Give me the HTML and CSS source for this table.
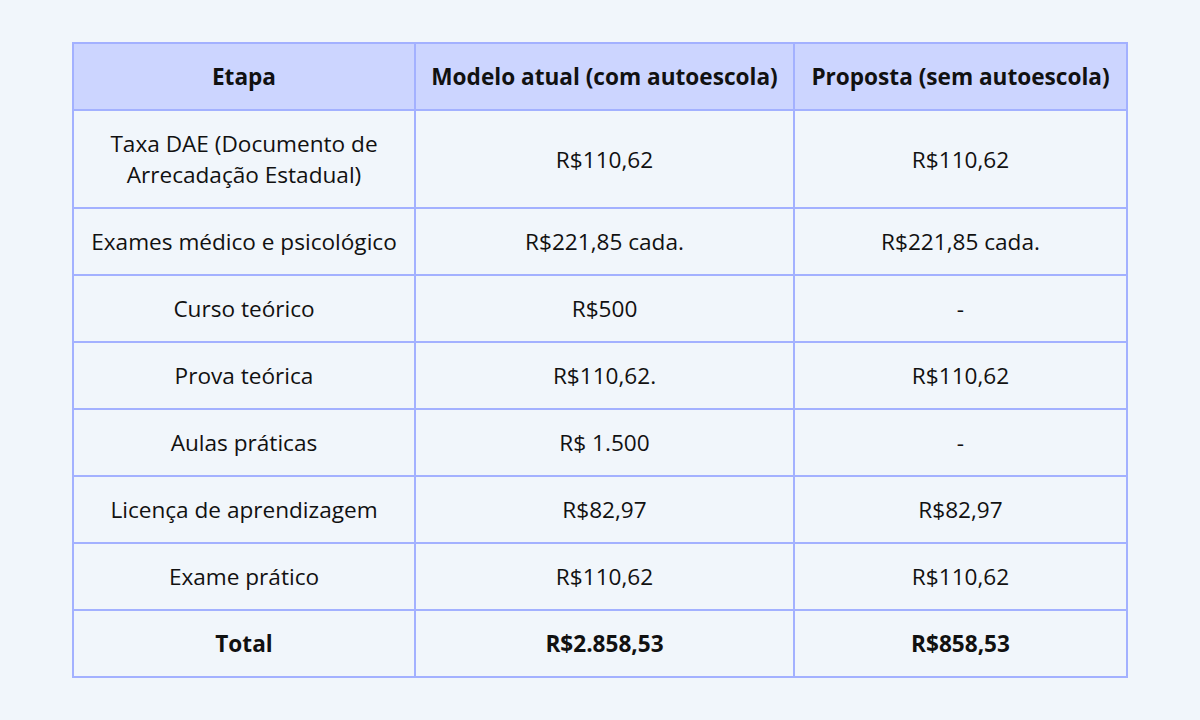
FILE: index.html
```html
<!DOCTYPE html>
<html lang="pt">
<head>
<meta charset="utf-8">
<link rel="stylesheet" href="styles.css">
</head>
<body>
<main class="page">
  <table class="costs">
    <colgroup>
      <col class="c1"><col class="c2"><col class="c3">
    </colgroup>
    <thead>
      <tr><th>Etapa</th><th>Modelo atual (com autoescola)</th><th>Proposta (sem autoescola)</th></tr>
    </thead>
    <tbody>
      <tr><td>Taxa DAE (Documento de<br>Arrecadação Estadual)</td><td>R$110,62</td><td>R$110,62</td></tr>
      <tr><td>Exames médico e psicológico</td><td>R$221,85 cada.</td><td>R$221,85 cada.</td></tr>
      <tr><td>Curso teórico</td><td>R$500</td><td>-</td></tr>
      <tr><td>Prova teórica</td><td>R$110,62.</td><td>R$110,62</td></tr>
      <tr><td>Aulas práticas</td><td>R$ 1.500</td><td>-</td></tr>
      <tr><td>Licença de aprendizagem</td><td>R$82,97</td><td>R$82,97</td></tr>
      <tr><td>Exame prático</td><td>R$110,62</td><td>R$110,62</td></tr>
      <tr class="total"><td>Total</td><td>R$2.858,53</td><td>R$858,53</td></tr>
    </tbody>
  </table>
</main>
</body>
</html>
```
FILE: styles.css
```css
html, body {
  margin: 0;
  padding: 0;
  background: #f1f6fb;
}
body {
  font-family: "Open Sans", "Noto Sans", sans-serif;
  color: #111;
}
.page {
  padding: 42px 72px;
}
.costs {
  border-collapse: collapse;
  width: 1054px;
  table-layout: fixed;
  font-size: 22.6px;
  line-height: 31px;
}
.c1 { width: 342px; }
.c2 { width: 379px; }
.c3 { width: 333px; }
.costs th, .costs td {
  border: 2px solid #a3b1ff;
  text-align: center;
  vertical-align: middle;
  padding: 17px 2px;
}
.costs th {
  background: #ccd5ff;
  font-weight: 700;
}
.costs .total td {
  font-weight: 700;
}
```
